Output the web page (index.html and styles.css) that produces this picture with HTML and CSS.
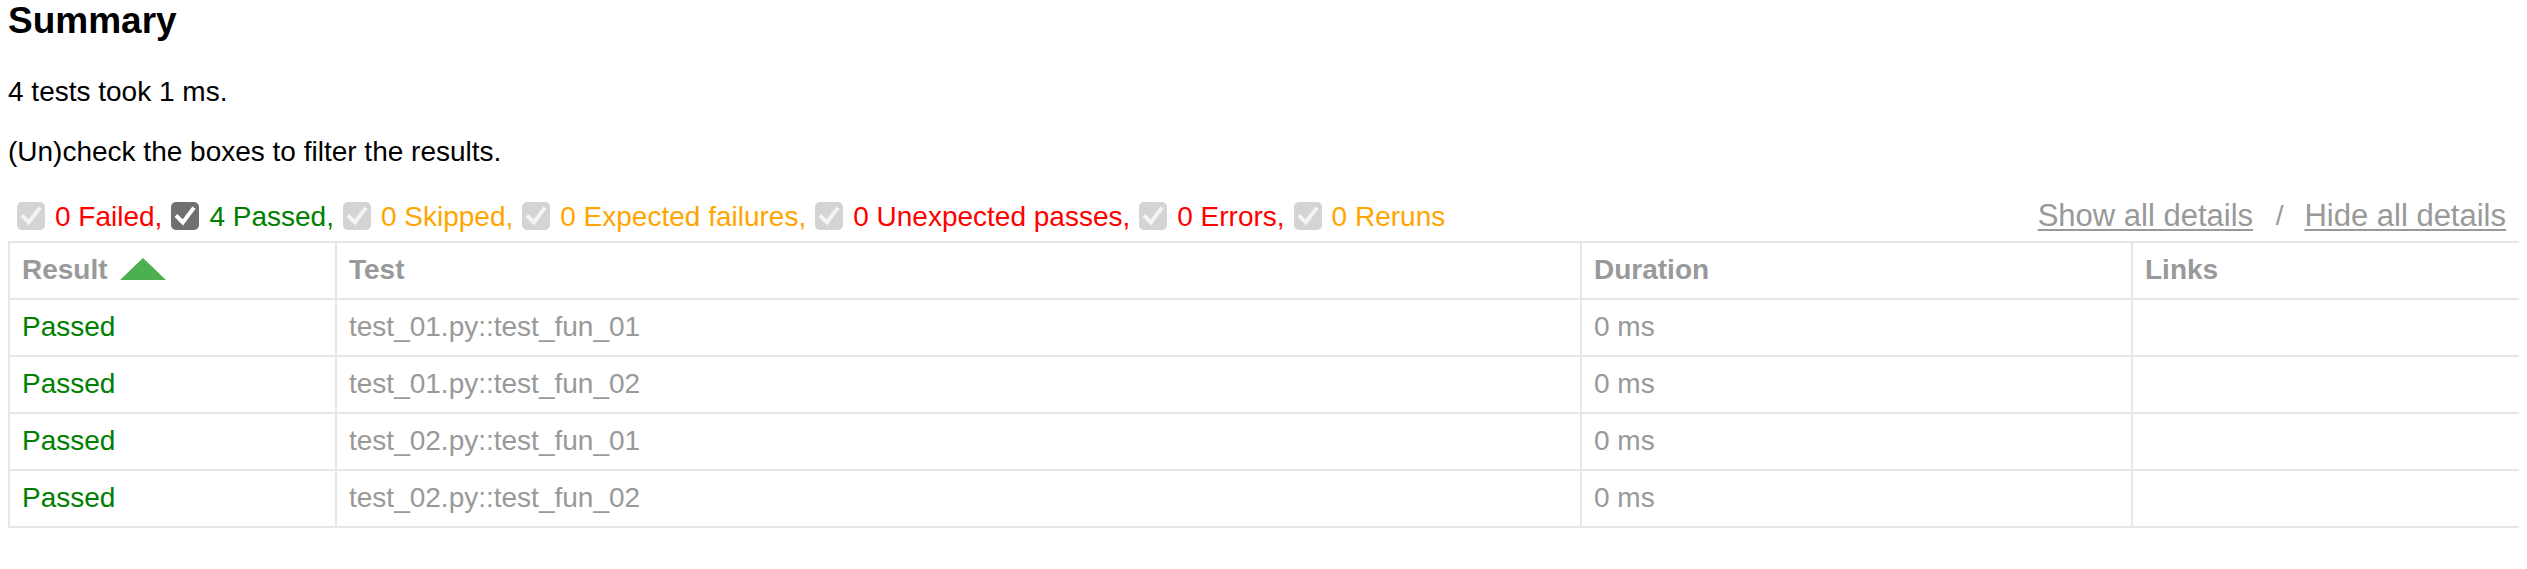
FILE: index.html
```
<!DOCTYPE html>
<html>
<head>
<meta charset="utf-8">
<title>Test Report</title>
<link rel="stylesheet" href="styles.css">
</head>
<body>
<h2 class="title">Summary</h2>
<p class="text first">4 tests took 1 ms.</p>
<p class="text">(Un)check the boxes to filter the results.</p>
<div class="controls">
  <div class="filters">
    <span class="box disabled"><svg viewBox="0 0 14 14"><path d="M3.2 7.4 L5.9 10.2 L10.9 3.6"/></svg></span><span class="label failed">0 Failed,</span>
    <span class="box on"><svg viewBox="0 0 14 14"><path d="M3.2 7.4 L5.9 10.2 L10.9 3.6"/></svg></span><span class="label passed">4 Passed,</span>
    <span class="box disabled"><svg viewBox="0 0 14 14"><path d="M3.2 7.4 L5.9 10.2 L10.9 3.6"/></svg></span><span class="label skipped">0 Skipped,</span>
    <span class="box disabled"><svg viewBox="0 0 14 14"><path d="M3.2 7.4 L5.9 10.2 L10.9 3.6"/></svg></span><span class="label skipped">0 Expected failures,</span>
    <span class="box disabled"><svg viewBox="0 0 14 14"><path d="M3.2 7.4 L5.9 10.2 L10.9 3.6"/></svg></span><span class="label failed">0 Unexpected passes,</span>
    <span class="box disabled"><svg viewBox="0 0 14 14"><path d="M3.2 7.4 L5.9 10.2 L10.9 3.6"/></svg></span><span class="label failed">0 Errors,</span>
    <span class="box disabled"><svg viewBox="0 0 14 14"><path d="M3.2 7.4 L5.9 10.2 L10.9 3.6"/></svg></span><span class="label skipped">0 Reruns</span>
  </div>
  <div class="collapse">
    <a class="toggle" href="#">Show all details</a><span class="sep">&nbsp;/&nbsp;</span><a class="toggle" href="#">Hide all details</a>
  </div>
</div>
<table class="results">
  <colgroup>
    <col class="c1"><col class="c2"><col class="c3"><col class="c4">
  </colgroup>
  <thead>
    <tr>
      <th><span class="sorted">Result</span><span class="arrow"></span></th>
      <th>Test</th>
      <th>Duration</th>
      <th>Links</th>
    </tr>
  </thead>
  <tbody>
    <tr><td class="passed">Passed</td><td>test_01.py::test_fun_01</td><td>0 ms</td><td></td></tr>
    <tr><td class="passed">Passed</td><td>test_01.py::test_fun_02</td><td>0 ms</td><td></td></tr>
    <tr><td class="passed">Passed</td><td>test_02.py::test_fun_01</td><td>0 ms</td><td></td></tr>
    <tr><td class="passed">Passed</td><td>test_02.py::test_fun_02</td><td>0 ms</td><td></td></tr>
  </tbody>
</table>
</body>
</html>
```
FILE: styles.css
```
html, body {
  background: #fff;
}
body {
  margin: 0 8px;
  font-family: "Liberation Sans", Arial, Helvetica, sans-serif;
  font-size: 28px;
  color: #999;
}
.title {
  margin: 2px 0 37px 0;
  font-size: 37px;
  line-height: 37px;
  font-weight: bold;
  color: #000;
}
.text {
  margin: 29px 0 27px 0;
  line-height: 31px;
  color: #000;
}
.text.first {
  margin-top: 0;
}
.controls {
  display: flex;
  justify-content: space-between;
  align-items: center;
  height: 44px;
  margin-bottom: 3px;
}
.filters {
  display: flex;
  align-items: center;
  padding-left: 9px;
}
.box {
  width: 28px;
  height: 28px;
  border-radius: 5px;
  display: flex;
  align-items: center;
  justify-content: center;
  margin-right: 10px;
}
.box svg {
  width: 28px;
  height: 28px;
}
.box path {
  fill: none;
  stroke-width: 2;
  stroke-linecap: square;
  stroke-linejoin: miter;
}
.box.disabled {
  background: #d4d4d4;
}
.box.disabled path {
  stroke: #f4f4f4;
}
.box.on {
  background: #707070;
}
.box.on path {
  stroke: #fff;
}
.label {
  margin-right: 9px;
  line-height: 31px;
}
.failed { color: #f00; }
.passed { color: #008000; }
.skipped { color: #ffa500; }
.collapse {
  display: flex;
  align-items: center;
  padding-right: 13px;
  font-size: 31px;
}
.toggle {
  color: #999;
  text-decoration: underline;
  text-decoration-thickness: 2px;
  text-underline-offset: 3px;
}
.sep {
  color: #999;
  font-size: 28px;
  padding: 0 13px 0 15px;
}
.results {
  border-collapse: collapse;
  table-layout: fixed;
  width: 100%;
  border: 2px solid #e6e6e6;
  color: #999;
}
.c1 { width: 327px; }
.c2 { width: 1245px; }
.c3 { width: 551px; }
.c4 { width: 388px; }
.results th, .results td {
  border: 2px solid #e6e6e6;
  padding: 11px 12px 13px 12px;
  text-align: left;
  line-height: 31px;
  height: 31px;
}
.results th {
  font-weight: bold;
}
.results td.passed {
  color: #008000;
}
.arrow {
  display: inline-block;
  width: 0;
  height: 0;
  margin-left: 12px;
  border-left: 23px solid transparent;
  border-right: 23px solid transparent;
  border-bottom: 22px solid #4caf50;
  vertical-align: -1px;
}
```
